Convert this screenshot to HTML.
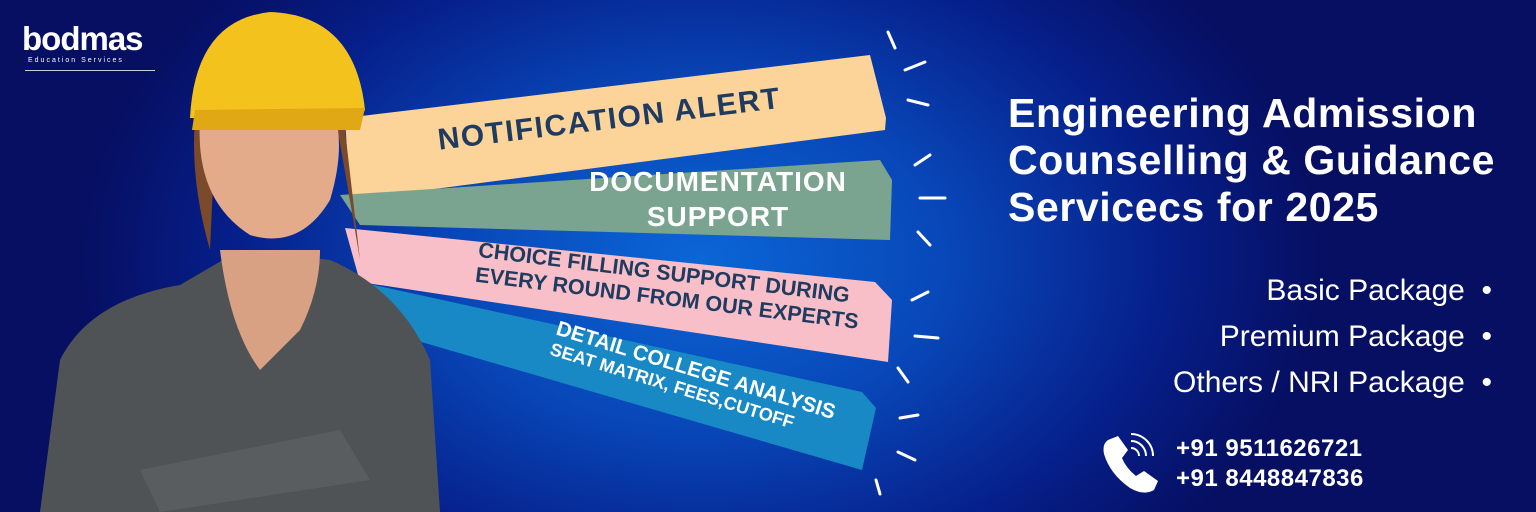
<!DOCTYPE html>
<html><head><meta charset="utf-8"><style>
body{margin:0;width:1536px;height:512px;overflow:hidden;font-family:"Liberation Sans",sans-serif}
.bg{position:absolute;inset:0;background:radial-gradient(ellipse 620px 420px at 700px 260px,#0b66d6 0%,#0847b8 40%,#061f8a 75%,#060f62 100%)}
svg{position:absolute;left:0;top:0}
.t{position:absolute;color:#fff;font-weight:bold}
</style></head><body>
<div class="bg"></div>
<svg width="1536" height="512">
 <polygon points="350,200 345,118 870,55 886,118 885,130" fill="#fcd49a"/>
 <polygon points="340,195 880,160 892,180 890,240 360,225" fill="#7aa390"/>
 <polygon points="345,228 875,282 892,300 888,362 360,282" fill="#f8bfc8"/>
 <polygon points="365,283 862,392 876,408 862,470 380,330" fill="#1889c4"/>
 <g stroke="#fff" stroke-width="3" stroke-linecap="round">
  <line x1="888" y1="32" x2="895" y2="48"/><line x1="905" y1="70" x2="925" y2="62"/><line x1="908" y1="100" x2="928" y2="105"/>
  <line x1="915" y1="165" x2="930" y2="155"/><line x1="920" y1="198" x2="945" y2="198"/><line x1="918" y1="232" x2="930" y2="245"/>
  <line x1="912" y1="300" x2="928" y2="292"/><line x1="915" y1="336" x2="938" y2="338"/><line x1="898" y1="368" x2="908" y2="382"/>
  <line x1="900" y1="418" x2="918" y2="415"/><line x1="898" y1="452" x2="915" y2="460"/><line x1="876" y1="480" x2="880" y2="494"/>
 </g>
 <path d="M40,512 L60,360 Q90,300 180,285 L240,250 L330,260 Q400,290 430,360 L440,512 Z" fill="#505355"/>
 <path d="M220,250 Q230,330 260,370 L300,330 Q320,290 320,250 Z" fill="#d9a184"/>
 <path d="M195,120 Q190,180 210,250 L215,140 Z M335,115 Q350,200 360,260 L345,130 Z" fill="#7a4a2a"/>
 <path d="M200,120 Q195,200 250,235 Q300,250 330,200 Q345,150 335,115 Z" fill="#e3ab8a"/>
 <path d="M190,118 Q195,20 270,12 Q355,15 365,110 L360,118 Z" fill="#f3c21c"/>
 <path d="M195,110 L365,108 L360,130 L192,130 Z" fill="#e0a815"/>
 <path d="M140,470 L340,430 L370,480 L160,512 Z" fill="#5a5d60"/>
</svg>
<div class="t" style="left:22px;top:20px;font-size:33px;letter-spacing:-1px">bodmas</div>
<div class="t" style="left:28px;top:57px;font-size:7px;letter-spacing:2px;font-weight:normal">Education Services</div>
<div style="position:absolute;left:25px;top:70px;width:130px;height:1px;background:#ccd"></div>
<div class="t" style="left:436px;top:124px;font-size:30px;color:#1f3b5f;transform:rotate(-7deg);transform-origin:left top;letter-spacing:1.5px">NOTIFICATION ALERT</div>
<div class="t" style="left:558px;top:164px;width:320px;text-align:center;font-size:28px;line-height:35px;letter-spacing:1px">DOCUMENTATION<br>SUPPORT</div>
<div class="t" style="left:480px;top:238px;font-size:21.5px;line-height:25px;color:#1f3b5f;transform:rotate(7deg);transform-origin:left top">CHOICE FILLING SUPPORT DURING<br>EVERY ROUND FROM OUR EXPERTS</div>
<div class="t" style="left:560px;top:318px;font-size:21px;line-height:21px;transform:rotate(17deg);transform-origin:left top">DETAIL COLLEGE ANALYSIS<br><span style="font-size:18px">SEAT MATRIX, FEES,CUTOFF</span></div>
<div class="t" style="left:1008px;top:90px;font-size:41px;line-height:47px;letter-spacing:0.6px">Engineering Admission<br>Counselling &amp; Guidance<br>Servicecs for 2025</div>
<div style="position:absolute;right:44px;top:268px;color:#fff;font-size:30px;line-height:46px;text-align:right">Basic Package &nbsp;•<br>Premium Package &nbsp;•<br>Others / NRI Package &nbsp;•</div>
<svg width="1536" height="512">
 <path d="M1108,440 l10,-4 l10,14 l-6,8 q4,10 14,18 l8,-5 l14,10 l-4,9 q-10,6 -24,-2 q-20,-14 -26,-34 q-2,-10 4,-14z" fill="#fff"/>
 <g fill="none" stroke="#fff" stroke-width="2"><path d="M1131,448 a8,8 0 0 1 8,8"/><path d="M1131,441 a15,15 0 0 1 15,15"/><path d="M1131,434 a22,22 0 0 1 22,22"/></g>
</svg>
<div class="t" style="left:1176px;top:434px;font-size:24px;line-height:30px;letter-spacing:0.5px">+91 9511626721<br>+91 8448847836</div>
</body></html>
